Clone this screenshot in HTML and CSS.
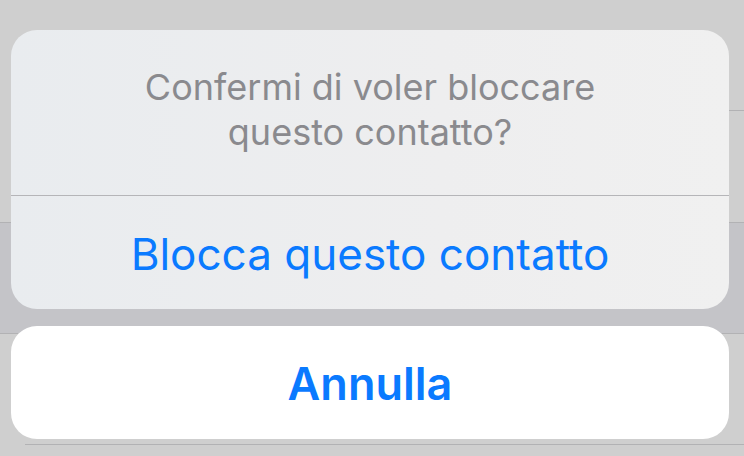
FILE: index.html
```html
<!DOCTYPE html>
<html lang="it">
<head>
<meta charset="utf-8">
<link rel="stylesheet" href="styles.css">
</head>
<body>
<div class="list">
  <div class="row row-inset"></div>
  <div class="row row-full"></div>
  <div class="row row-dark"></div>
  <div class="row row-inset"></div>
  <div class="row row-last"></div>
</div>
<div class="sheet">
  <div class="card">
    <div class="title">Confermi di voler bloccare<br>questo contatto?</div>
    <div class="action">Blocca questo contatto</div>
  </div>
  <div class="card card-cancel">
    <div class="action action-bold">Annulla</div>
  </div>
</div>
</body>
</html>
```
FILE: styles.css
```css
html, body {
  margin: 0;
  padding: 0;
  width: 744px;
  height: 456px;
  overflow: hidden;
  background: #cfcfcf;
  font-family: Inter, "Noto Sans", sans-serif;
}
.list {
  display: flex;
  flex-direction: column;
  height: 456px;
}
.row {
  box-sizing: border-box;
  background: #cfcfcf;
  flex: none;
}
.row-full {
  height: 112px;
  border-bottom: 1px solid #b2b2b4;
}
.row-dark {
  height: 111px;
  background-color: #c4c4c8;
  border-bottom: 1px solid #b2b2b4;
}
.row-inset {
  height: 111px;
  background-image: linear-gradient(#b2b2b4, #b2b2b4);
  background-size: calc(100% - 25px) 1px;
  background-position: 25px 100%;
  background-repeat: no-repeat;
}
.row-last {
  flex: 1;
}
.sheet {
  position: absolute;
  top: 30px;
  left: 11px;
  width: 718px;
  display: flex;
  flex-direction: column;
  gap: 17px;
}
.card {
  background: linear-gradient(90deg, #e9ecef 0%, #eeeeef 60%, #f0f0f0 100%);
  border-radius: 26px;
  overflow: hidden;
  display: flex;
  flex-direction: column;
}
.card-cancel {
  background: #ffffff;
}
.title {
  height: 166px;
  display: flex;
  align-items: center;
  justify-content: center;
  text-align: center;
  color: #8a8a8e;
  font-size: 36px;
  line-height: 45px;
  border-bottom: 1px solid #b5b5b8;
  box-sizing: border-box;
  padding-bottom: 6px;
}
.action {
  height: 113px;
  display: flex;
  align-items: center;
  justify-content: center;
  color: #0a7aff;
  font-size: 44px;
  padding-top: 2px;
  box-sizing: border-box;
}
.action-bold {
  font-size: 45px;
  font-weight: 600;
  padding-top: 1px;
}
```
